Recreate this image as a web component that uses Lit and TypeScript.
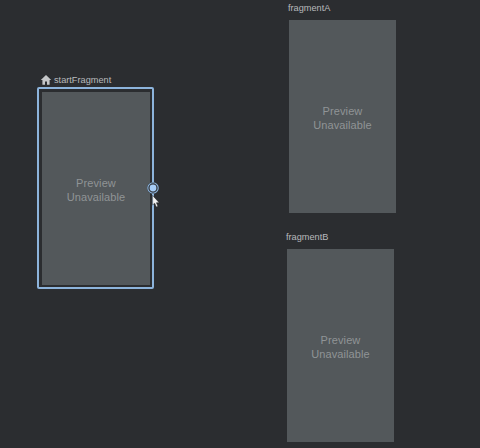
import { LitElement, html, css } from "lit";
import { customElement, property } from "lit/decorators.js";

@customElement("dest-node")
class DestNode extends LitElement {
  @property({ type: String }) label = "";
  @property({ type: Boolean }) selected = false;
  @property({ type: Boolean }) home = false;
  static styles = css`
    :host { display: block; position: absolute; width: 107px; }
    .label {
      position: absolute; left: -1px; top: -19px; height: 14px;
      display: flex; align-items: center; gap: 2px;
      font: 9.2px/14px "Liberation Sans", sans-serif; color: #b8babc; white-space: nowrap;
    }
    .label.has-icon { left: -2px; top: -19px; gap: 2px; }
    .label svg { width: 12px; height: 12px; display: block; }
    .frame { position: relative; }
    .selected { box-sizing: border-box; position: absolute; inset: -5px -4px -4px -5px; border: 2px solid #8db4dc; border-radius: 2px; background: #2b2d30; }
    .screen {
      position: relative; height: 193px; background: #53585b; padding-top: 2px; box-sizing: border-box;
      display: flex; flex-direction: column; align-items: center; justify-content: center;
      font: 11px/14px "Liberation Sans", sans-serif; letter-spacing: 0.1px; color: #909496; text-align: center;
    }
    .screen span { display: block; }
  `;
  render() {
    return html`
      ${this.selected ? html`<div class="selected"></div>` : null}
      <div class="label ${this.home ? "has-icon" : ""}">
        ${this.home
          ? html`<svg viewBox="0 0 12 12"><path fill="#c4c6c8" d="M6 1 .8 6H2.4V10.8H5V7.6H7V10.8H9.6V6H11.2Z"/></svg>`
          : null}
        <span>${this.label}</span>
      </div>
      <div class="frame">
        <div class="screen"><span>Preview</span><span>Unavailable</span></div>
      </div>
    `;
  }
}

@customElement("app-root")
export class AppRoot extends LitElement {
  static styles = css`
    :host { display: block; position: relative; width: 480px; height: 448px; background: #2b2d30; overflow: hidden; }
    .start { left: 42px; top: 92px; width: 108px; }
    .a { left: 289px; top: 20px; }
    .b { left: 287px; top: 249px; }
    .handle { position: absolute; left: 147px; top: 182px; width: 12px; height: 12px; display: block; }
    .cursor { position: absolute; left: 152px; top: 195px; width: 9px; height: 13px; display: block; }
  `;
  render() {
    return html`
      <dest-node class="start" label="startFragment" selected home></dest-node>
      <dest-node class="a" label="fragmentA"></dest-node>
      <dest-node class="b" label="fragmentB"></dest-node>
      <svg class="handle" viewBox="0 0 12 12">
        <circle cx="6" cy="6" r="6" fill="#2f3236"/>
        <circle cx="6" cy="6" r="5.2" fill="none" stroke="#8db4dc" stroke-width="1.1"/>
        <circle cx="6" cy="6" r="3.4" fill="#a6cdf7"/>
      </svg>
      <svg class="cursor" viewBox="0 0 9 13">
        <path d="M.6.4V10L2.7 8.2 4.3 12 5.9 11.2 4.4 7.7H7.2Z" fill="#f4f4f4" stroke="#222" stroke-width=".5"/>
      </svg>
    `;
  }
}
